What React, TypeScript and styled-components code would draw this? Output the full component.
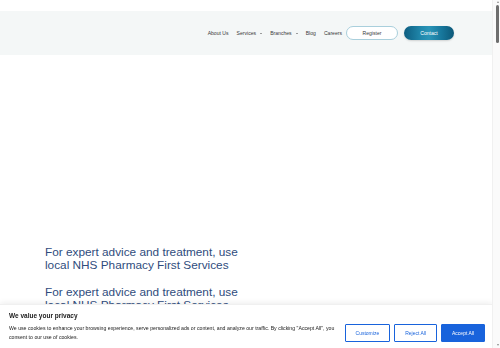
import React from "react";
import styled, { createGlobalStyle } from "styled-components";

const Global = createGlobalStyle`
  html, body { margin: 0; padding: 0; background: #ffffff; }
  html::-webkit-scrollbar { display: none; }
  body { font-family: "Liberation Sans", Arial, sans-serif; padding-right: 8px; }
`;

const Page = styled.div`
  padding-top: 11px;
  min-height: 3189px;
`;

const Header = styled.header`
  height: 44px;
  background: #f4f7f7;
  display: flex;
  align-items: center;
  justify-content: flex-end;
  padding-right: 38px;
`;

const Nav = styled.nav`
  display: flex;
  align-items: center;
  gap: 8px;
  margin-right: 4px;
`;

const NavItem = styled.a`
  display: flex;
  align-items: center;
  gap: 4px;
  font-size: 5.1px;
  color: #3a3a3a;
  text-decoration: none;
  white-space: nowrap;
`;

const Caret = styled.span`
  width: 0;
  height: 0;
  border-left: 1.2px solid transparent;
  border-right: 1.2px solid transparent;
  border-top: 1.5px solid #444;
`;

const Actions = styled.div`
  display: flex;
  align-items: center;
  gap: 6px;
`;

const PillButton = styled.button<{ $primary?: boolean }>`
  box-sizing: border-box;
  height: ${(p) => (p.$primary ? "13.5px" : "14px")};
  width: ${(p) => (p.$primary ? "50px" : "52px")};
  border-radius: 8px;
  font-family: "Liberation Sans", Arial, sans-serif;
  font-size: 5.1px;
  padding: 0;
  cursor: pointer;
  color: ${(p) => (p.$primary ? "#ffffff" : "#3a3a3a")};
  border: ${(p) => (p.$primary ? "none" : "1px solid #a9cfdc")};
  background: ${(p) =>
    p.$primary
      ? "linear-gradient(90deg, #0d5d80 0%, #2189ad 35%, #2a95b8 50%, #17779c 75%, #0c5878 100%)"
      : "#ffffff"};
  box-shadow: ${(p) => (p.$primary ? "0 1px 2px rgba(0,0,0,0.15)" : "none")};
`;

const Hero = styled.section`
  padding: 191px 0 0 45px;
`;

const Heading = styled.h2`
  margin: 0 0 14px;
  max-width: 205px;
  font-family: "Liberation Sans", Arial, sans-serif;
  font-weight: 400;
  font-size: 11.8px;
  line-height: 13px;
  color: #2f4c7d;
`;

const Banner = styled.div`
  position: fixed;
  left: 0;
  right: 8px;
  bottom: 0;
  background: #ffffff;
  box-shadow: 0 -1px 6px rgba(0, 0, 0, 0.08);
  border-top: 1px solid #f0f0f0;
  padding: 6px 7px 6px 9px;
  font-family: "Liberation Sans", Arial, sans-serif;
  color: #212121;
`;

const BannerTitle = styled.div`
  font-size: 6.5px;
  font-weight: 700;
  line-height: 9px;
  margin-bottom: 4px;
`;

const BannerRow = styled.div`
  display: flex;
  align-items: center;
  gap: 10px;
`;

const BannerText = styled.p`
  flex: 1;
  margin: 0;
  font-size: 5.2px;
  line-height: 9px;
  color: #212121;
`;

const BannerButtons = styled.div`
  display: flex;
  gap: 4px;
`;

const ConsentButton = styled.button<{ $filled?: boolean }>`
  box-sizing: border-box;
  height: 17.5px;
  padding: 0 10px;
  font-family: "Liberation Sans", Arial, sans-serif;
  font-size: 5px;
  border: 1px solid #1863dc;
  border-radius: 1px;
  color: ${(p) => (p.$filled ? "#ffffff" : "#1863dc")};
  background: ${(p) => (p.$filled ? "#1863dc" : "#ffffff")};
  cursor: pointer;
  white-space: nowrap;
`;

const ScrollTrack = styled.div`
  position: fixed;
  top: 0;
  right: 0;
  bottom: 0;
  width: 8px;
  background: #fafafa;
  border-left: 1px solid #f0f0f0;
  box-sizing: border-box;
  display: flex;
  flex-direction: column;
  align-items: flex-end;
  padding: 1px 1px 2px 0;
`;

const Arrow = styled.span<{ $down?: boolean }>`
  width: 0;
  height: 0;
  margin-right: 0.5px;
  border-left: 1.5px solid transparent;
  border-right: 1.5px solid transparent;
  ${(p) =>
    p.$down ? "border-top: 2px solid #8a8a8a; margin-top: auto;" : "border-bottom: 2px solid #8a8a8a;"}
`;

const Thumb = styled.span`
  width: 3px;
  height: 38px;
  margin-top: 2px;
  border-radius: 2px;
  background: #6e6e6e;
`;

export default function App() {
  return (
    <>
      <Global />
      <Page>
        <Header>
          <Nav>
            <NavItem href="#">About Us</NavItem>
            <NavItem href="#">
              Services <Caret />
            </NavItem>
            <NavItem href="#">
              Branches <Caret />
            </NavItem>
            <NavItem href="#">Blog</NavItem>
            <NavItem href="#">Careers</NavItem>
          </Nav>
          <Actions>
            <PillButton>Register</PillButton>
            <PillButton $primary>Contact</PillButton>
          </Actions>
        </Header>
        <Hero>
          <Heading>For expert advice and treatment, use local NHS Pharmacy First Services</Heading>
          <Heading>For expert advice and treatment, use local NHS Pharmacy First Services</Heading>
        </Hero>
      </Page>
      <Banner>
        <BannerTitle>We value your privacy</BannerTitle>
        <BannerRow>
          <BannerText>
            We use cookies to enhance your browsing experience, serve personalized ads or content, and
            analyze our traffic. By clicking "Accept All", you consent to our use of cookies.
          </BannerText>
          <BannerButtons>
            <ConsentButton>Customize</ConsentButton>
            <ConsentButton>Reject All</ConsentButton>
            <ConsentButton $filled>Accept All</ConsentButton>
          </BannerButtons>
        </BannerRow>
      </Banner>
      <ScrollTrack>
        <Arrow />
        <Thumb />
        <Arrow $down />
      </ScrollTrack>
    </>
  );
}
